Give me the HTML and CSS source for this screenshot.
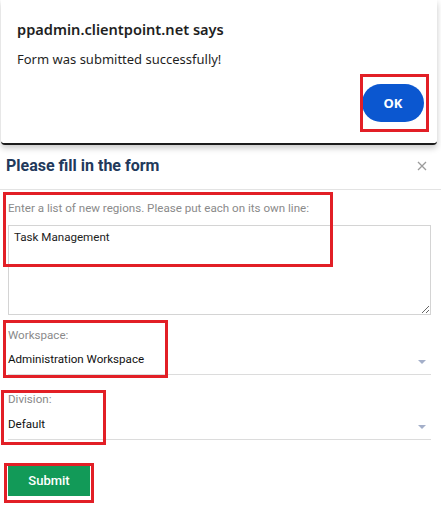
FILE: index.html
```html
<!DOCTYPE html>
<html lang="en">
<head>
  <meta charset="UTF-8">
  <title>Please fill in the form</title>
  <meta name="viewport" content="width=device-width, initial-scale=1.0">
  <link rel="stylesheet" href="styles.css">
</head>
<body>
  <div class="alert">
    <div class="alert-title">ppadmin.clientpoint.net says</div>
    <div class="alert-text">Form was submitted successfully!</div>
    <div class="alert-actions">
      <button class="ok-btn">OK</button>
    </div>
  </div>

  <div class="modal-header">
    <h3>Please fill in the form</h3>
    <span class="close">
      <svg width="10" height="10" viewBox="0 0 10 10"><path d="M1 1L9 9M9 1L1 9" stroke="#9b9b9b" stroke-width="1.3" fill="none"/></svg>
    </span>
  </div>

  <div class="form-body">
    <label class="field-label">Enter a list of new regions. Please put each on its own line:</label>
    <textarea class="regions">Task Management</textarea>

    <div class="field">
      <label class="field-label">Workspace:</label>
      <div class="select">
        <span>Administration Workspace</span>
        <span class="caret"></span>
      </div>
    </div>

    <div class="field division">
      <label class="field-label">Division:</label>
      <div class="select">
        <span>Default</span>
        <span class="caret"></span>
      </div>
    </div>

    <button class="submit-btn">Submit</button>
  </div>

  <!-- red annotation boxes -->
  <div class="mark mark-ok"></div>
  <div class="mark mark-regions"></div>
  <div class="mark mark-workspace"></div>
  <div class="mark mark-division"></div>
  <div class="mark mark-submit"></div>
</body>
</html>
```

FILE: styles.css
```css
body {
  margin: 0;
  background: #fff;
  font-family: Roboto, "Liberation Sans", sans-serif;
  position: relative;
  width: 441px;
  height: 522px;
  overflow: hidden;
}
.alert {
  position: relative;
  z-index: 2;
  width: 436px;
  height: 145px;
  margin-left: 1px;
  box-sizing: border-box;
  padding: 19px 13px 0 16px;
  background: #fff;
  border-bottom: 2px solid #1c1c1c;
  border-radius: 0 0 4px 4px;
  box-shadow: 0 3px 6px rgba(0,0,0,0.22);
  font-family: "Noto Sans", "Open Sans", sans-serif;
  color: #1f1f1f;
}
.alert-title {
  font-size: 14.6px;
  font-weight: 600;
  line-height: 20px;
}
.alert-text {
  margin-top: 11px;
  font-size: 13px;
  line-height: 18px;
}
.alert-actions {
  display: flex;
  justify-content: flex-end;
  margin-top: 16px;
}
.ok-btn {
  width: 62px;
  height: 38px;
  border: none;
  border-radius: 19px;
  background: #0b57d0;
  color: #fff;
  font-family: "Noto Sans", sans-serif;
  font-size: 13px;
  font-weight: 700;
}
.modal-header {
  display: flex;
  justify-content: space-between;
  align-items: center;
  height: 45px;
  box-sizing: border-box;
  padding: 11px 14px 15px 6px;
  border-bottom: 1px solid #e3e3e3;
}
.modal-header h3 {
  margin: 0;
  font-size: 16px;
  font-weight: 700;
  line-height: 19px;
  color: #22395b;
}
.close {
  display: flex;
  margin-top: 2px;
}
.form-body {
  padding: 11px 10px 0 8px;
}
.field-label {
  display: block;
  font-size: 11.6px;
  line-height: 14px;
  color: #8a8a8a;
}
.regions {
  display: block;
  width: 100%;
  height: 90px;
  box-sizing: border-box;
  margin-top: 10px;
  padding: 4px 5px;
  border: 1px solid #d4d4d4;
  border-radius: 0;
  font-family: Roboto, sans-serif;
  font-size: 11.6px;
  line-height: 14px;
  color: #222;
}
.field {
  margin-top: 13px;
}
.field.division {
  margin-top: 17px;
}
.select {
  display: flex;
  justify-content: space-between;
  align-items: center;
  margin-top: 10px;
  padding: 0 5px 8px 0;
  border-bottom: 1px solid #dcdcdc;
  font-size: 11.6px;
  line-height: 14px;
  color: #111;
}
.division .select {
  margin-top: 11px;
}
.caret {
  width: 0;
  height: 0;
  margin-top: 6px;
  border-left: 4px solid transparent;
  border-right: 4px solid transparent;
  border-top: 4px solid #a4afc9;
}
.submit-btn {
  display: block;
  margin-top: 25px;
  width: 82px;
  height: 31px;
  border: none;
  border-radius: 0;
  background: #129a58;
  color: #fff;
  font-family: Roboto, sans-serif;
  font-size: 13px;
  font-weight: 500;
}
.mark {
  position: absolute;
  z-index: 3;
  border: 3px solid #e21f26;
  box-sizing: border-box;
}
.mark-ok { left: 360px; top: 74px; width: 69px; height: 58px; }
.mark-regions { left: 3px; top: 192px; width: 330px; height: 75px; }
.mark-workspace { left: 3px; top: 320px; width: 165px; height: 58px; }
.mark-division { left: 1px; top: 390px; width: 105px; height: 55px; }
.mark-submit { left: 4px; top: 463px; width: 90px; height: 40px; }
```
